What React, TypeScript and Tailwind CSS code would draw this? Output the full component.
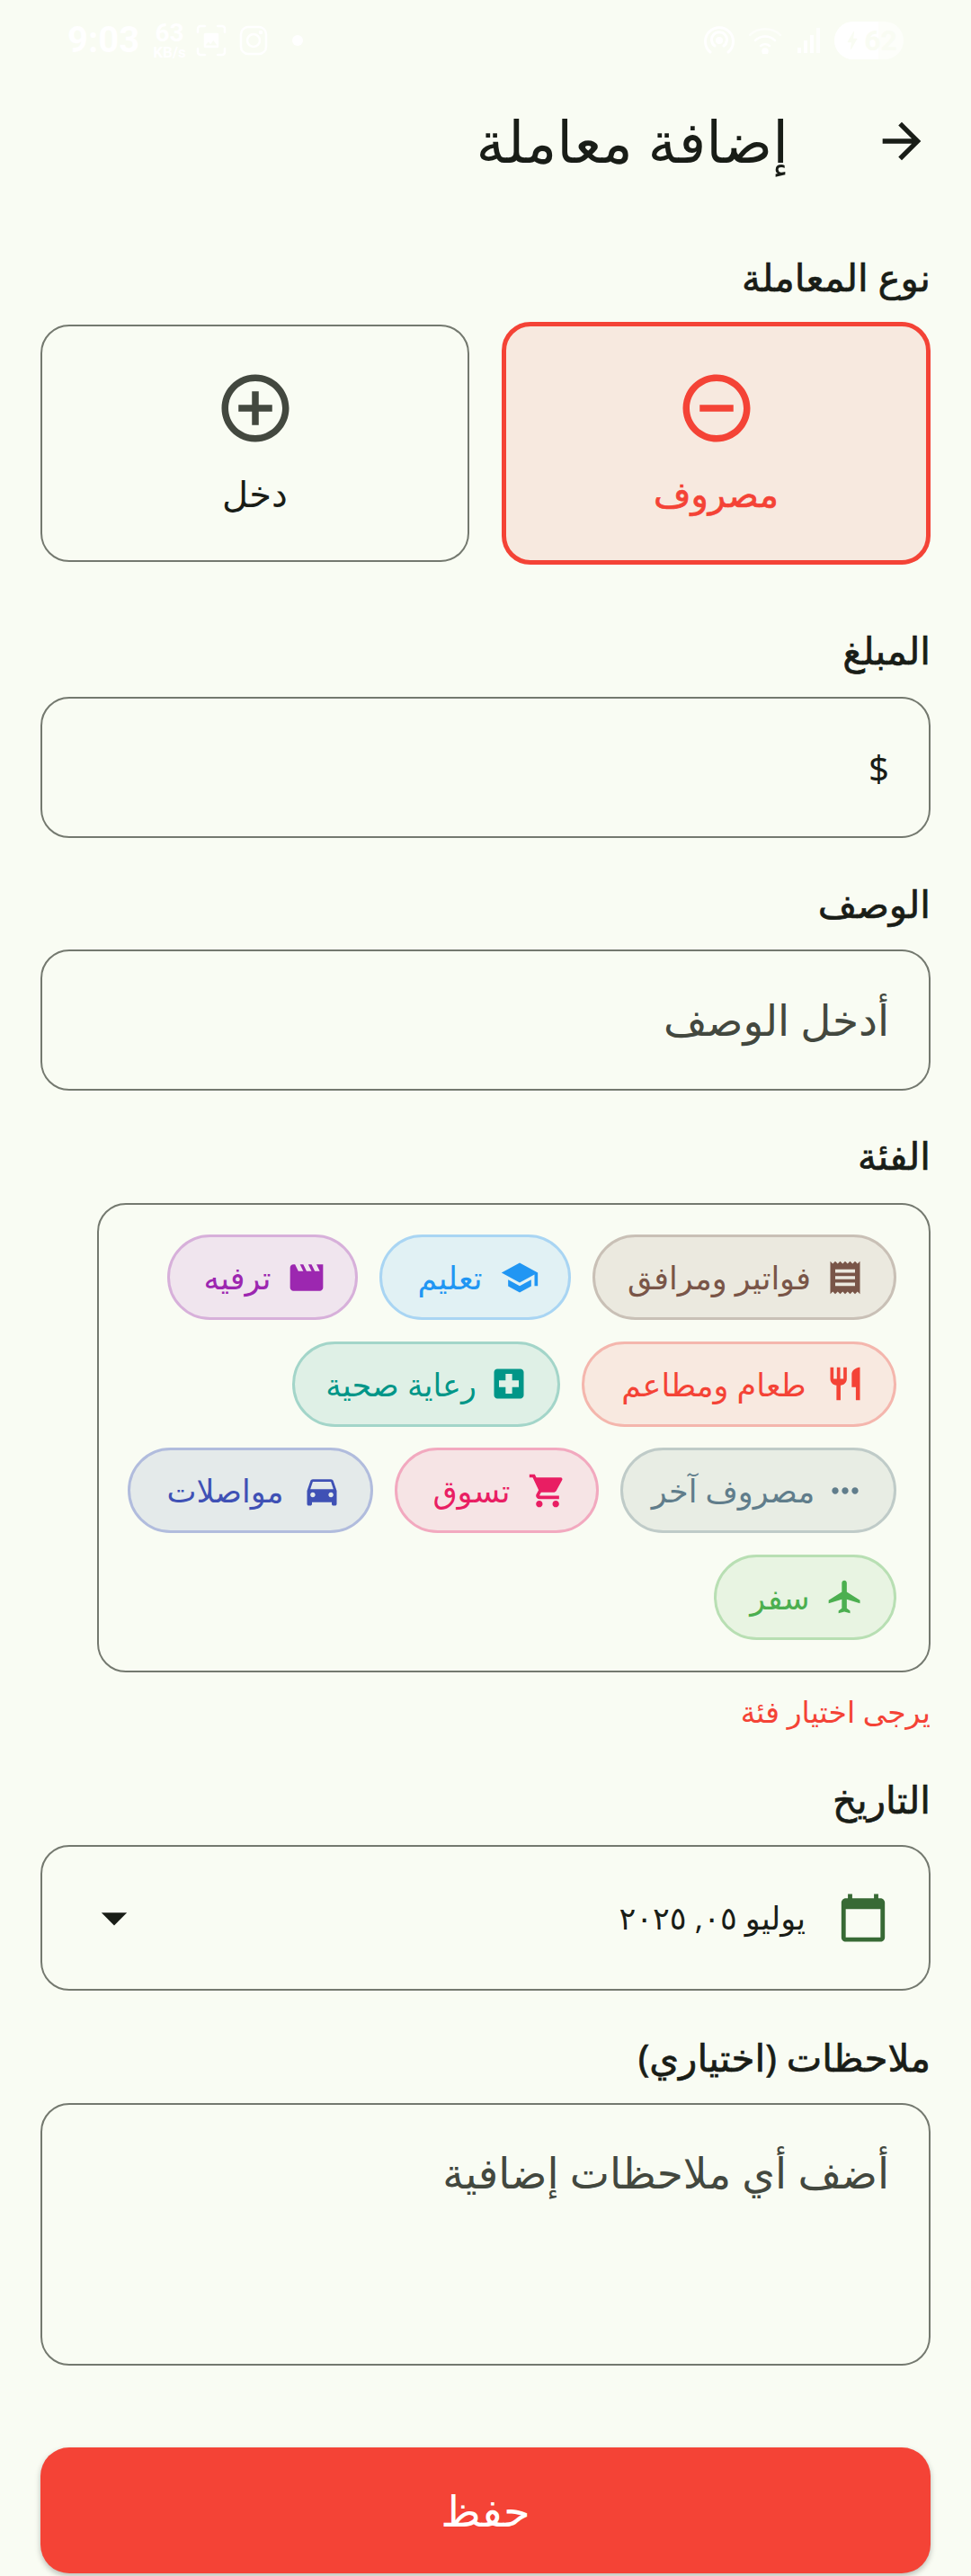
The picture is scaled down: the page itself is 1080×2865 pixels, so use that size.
import type { ReactNode } from "react";
import {
  MdAddCircleOutline,
  MdRemoveCircleOutline,
  MdReceipt,
  MdSchool,
  MdMovie,
  MdRestaurant,
  MdLocalHospital,
  MdMoreHoriz,
  MdShoppingCart,
  MdDirectionsCar,
  MdFlight,
  MdCalendarToday,
  MdArrowDropDown,
  MdArrowForward,
  MdBolt,
  MdImage,
} from "react-icons/md";

const categories = [
  { name: "فواتير ومرافق", icon: MdReceipt, chip: "w-[338px] bg-[#ebe9df] border-[#c9c0b6] text-[#795548]" },
  { name: "تعليم", icon: MdSchool, chip: "w-[213px] bg-[#e1f1f4] border-[#a9d5f3] text-[#2196f3]" },
  { name: "ترفيه", icon: MdMovie, chip: "w-[212px] bg-[#f0e5ee] border-[#d7b0da] text-[#9c27b0]" },
  { name: "طعام ومطاعم", icon: MdRestaurant, chip: "w-[350px] bg-[#f8e9e0] border-[#f4b6ad] text-[#f44336]" },
  { name: "رعاية صحية", icon: MdLocalHospital, chip: "w-[298px] bg-[#dff0e6] border-[#a3d5c9] text-[#009688]" },
  { name: "مصروف آخر", icon: MdMoreHoriz, chip: "w-[307px] bg-[#e8ede4] border-[#bfcbc8] text-[#607d8b]" },
  { name: "تسوق", icon: MdShoppingCart, chip: "w-[227px] bg-[#f6e4e5] border-[#f2a9bf] text-[#e91e63]" },
  { name: "مواصلات", icon: MdDirectionsCar, chip: "w-[273px] bg-[#e4eaea] border-[#b1bcdd] text-[#3f51b5]" },
  { name: "سفر", icon: MdFlight, chip: "w-[203px] bg-[#e8f4e2] border-[#b8dfb3] text-[#4caf50]" },
];

const Label = ({ children, className }: { children: ReactNode; className: string }) => (
  <div className={`text-[42px] leading-[52px] pb-[4px] [-webkit-text-stroke:0.7px] text-[#191d17] ${className}`}>{children}</div>
);

// white status bar on a near-white page, as in the capture
const StatusBar = () => (
  <div dir="ltr" className="h-[88px] flex items-center justify-between pl-[75px] pr-[75px] pt-[2px] text-white font-['Roboto',sans-serif]">
    <div className="flex items-center">
      <span className="text-[40px] font-bold leading-none">9:03</span>
      <span className="ml-[15px] flex flex-col items-center text-[17px] font-bold leading-[17px]">
        <span className="text-[28px] leading-[26px]">63</span>
        <span>KB/s</span>
      </span>
      <span className="relative ml-[11px] w-[34px] h-[36px]">
        <svg viewBox="0 0 34 36" className="w-[34px] h-[36px]" fill="none" stroke="currentColor" strokeWidth="2.5" strokeLinecap="round">
          <path d="M2 9V5a3 3 0 0 1 3-3h5M24 2h5a3 3 0 0 1 3 3v4M32 27v4a3 3 0 0 1-3 3h-5M10 34H5a3 3 0 0 1-3-3v-4" />
        </svg>
        <MdImage className="absolute left-[6px] top-[7px] w-[22px] h-[22px]" />
      </span>
      <svg viewBox="0 0 32 34" className="ml-[14px] w-[32px] h-[34px]" fill="none" stroke="currentColor" strokeWidth="2.5">
        <rect x="2" y="2" width="28" height="30" rx="8" />
        <circle cx="16" cy="17" r="7" />
        <circle cx="24" cy="8" r="1" fill="currentColor" />
      </svg>
      <span className="ml-[27px] w-[12px] h-[12px] rounded-full bg-white" />
    </div>
    <div className="flex items-center">
      <svg viewBox="0 0 34 32" className="w-[34px] h-[32px]" fill="none" stroke="currentColor" strokeWidth="3" strokeLinecap="round">
        <path d="M7 29a15.5 15.5 0 1 1 20 0M12 22a8.5 8.5 0 1 1 10 0" />
        <circle cx="17" cy="16" r="2.5" fill="currentColor" />
      </svg>
      <svg viewBox="0 0 38 30" className="ml-[15px] w-[38px] h-[30px]" fill="none" stroke="currentColor" strokeWidth="2.5" strokeLinecap="round">
        <path d="M2 9a25 25 0 0 1 34 0" opacity="0.6" />
        <path d="M8 15a16 16 0 0 1 22 0M14 21a8 8 0 0 1 10 0" />
        <circle cx="19" cy="27" r="2.5" fill="currentColor" />
      </svg>
      <div className="ml-[17px] flex items-end gap-[3px] h-[28px]">
        <span className="w-[4px] h-[6px] bg-white" />
        <span className="w-[4px] h-[14px] bg-white" />
        <span className="w-[4px] h-[20px] bg-white" />
        <span className="w-[4px] h-[28px] bg-white/70" />
      </div>
      <div className="relative ml-[16px] w-[77px] h-[42px] rounded-full bg-white/60 overflow-hidden flex items-center justify-center text-[#f9fcf3] text-[32px] font-bold">
        <span className="absolute inset-y-0 left-0 w-[49px] bg-white" />
        <MdBolt className="relative w-[26px] h-[28px]" />
        <span className="relative leading-none">62</span>
      </div>
    </div>
  </div>
);

export default function App() {
  return (
    <div dir="rtl" className="w-[1080px] h-[2865px] overflow-hidden bg-[#f9fcf3] text-[#191d17] font-['Noto_Sans','DejaVu_Sans',sans-serif]">
      <StatusBar />

      {/* Header */}
      <div className="h-[138px] flex items-center pr-[45px]">
        <MdArrowForward className="w-[64px] h-[64px] text-[#191d17]" />
        <h1 className="mr-[94px] text-[64px] leading-none font-normal">إضافة معاملة</h1>
      </div>

      <div className="px-[45px]">
        <Label className="mt-[56px]">نوع المعاملة</Label>

        <div className="mt-[20px] grid grid-cols-2 gap-[36px] items-center">
          <div className="h-[270px] rounded-[32px] border-[5px] border-[#f44336] bg-[#f7e9df] flex flex-col items-center justify-center gap-[22px] text-[#f44336]">
            <MdRemoveCircleOutline className="w-[90px] h-[90px]" />
            <span className="text-[40px] leading-[56px] [-webkit-text-stroke:0.7px]">مصروف</span>
          </div>
          <div className="h-[264px] rounded-[32px] border-2 border-[#74796f] flex flex-col items-center justify-center gap-[22px]">
            <MdAddCircleOutline className="w-[90px] h-[90px] text-[#43483f]" />
            <span className="text-[40px] leading-[56px]">دخل</span>
          </div>
        </div>

        <Label className="mt-[69px]">المبلغ</Label>
        <div className="mt-[22px] h-[157px] rounded-[32px] border-2 border-[#74796f] flex items-center px-[44px]">
          <span className="text-[40px]">$</span>
        </div>

        <Label className="mt-[47px]">الوصف</Label>
        <div className="mt-[21px] h-[157px] rounded-[32px] border-2 border-[#74796f] flex items-center px-[44px]">
          <span className="text-[47px] text-[#43483f]">أدخل الوصف</span>
        </div>

        <Label className="mt-[46px]">الفئة</Label>
        <div className="mt-[23px] w-[927px] h-[522px] rounded-[32px] border-2 border-[#74796f] flex flex-wrap content-start gap-x-[24px] gap-y-[23.5px] pr-[36px] pl-[24px] pt-[33px]">
          {categories.map((c) => (
            <div key={c.name} className={`h-[95px] rounded-full border-[3px] flex items-center gap-[10px] pr-[32px] pl-[30px] ${c.chip}`}>
              <c.icon className="w-[44px] h-[44px] shrink-0" />
              <span className="flex-1 text-center whitespace-nowrap text-[35px] leading-none">{c.name}</span>
            </div>
          ))}
        </div>

        <div className="mt-[20px] text-[33px] leading-[48px] text-[#f44336]">يرجى اختيار فئة</div>

        <Label className="mt-[47px]">التاريخ</Label>
        <div className="mt-[21px] h-[162px] rounded-[32px] border-2 border-[#74796f] flex items-center justify-between pr-[44px] pl-[46px]">
          <div className="flex items-center gap-[35px]">
            <MdCalendarToday className="w-[58px] h-[58px] text-[#386a35]" />
            <span className="text-[35px]">يوليو ٠٥, ٢٠٢٥</span>
          </div>
          <MdArrowDropDown className="w-[68px] h-[68px]" />
        </div>

        <Label className="mt-[48px]">ملاحظات (اختياري)</Label>
        <div className="mt-[21px] h-[292px] rounded-[32px] border-2 border-[#74796f] px-[44px] pt-[40px]">
          <span className="text-[47px] text-[#43483f]">أضف أي ملاحظات إضافية</span>
        </div>

        <button className="mt-[91px] w-full h-[140px] rounded-[32px] bg-[#f44336] text-white text-[48px] font-medium shadow-[0_3px_6px_rgba(0,0,0,0.25)]">
          حفظ
        </button>
      </div>
    </div>
  );
}
